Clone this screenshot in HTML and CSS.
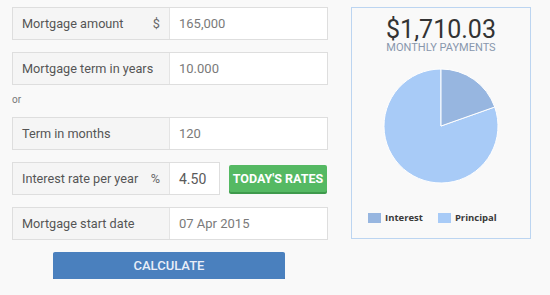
FILE: index.html
```html
<!DOCTYPE html>
<html>
<head>
<meta charset="utf-8">
<link rel="stylesheet" href="styles.css">
</head>
<body>
<div class="page">
  <div class="form">
    <div class="row box">
      <div class="label"><span>Mortgage amount</span><span class="unit">$</span></div>
      <div class="value">165,000</div>
    </div>
    <div class="row box">
      <div class="label"><span>Mortgage term in years</span></div>
      <div class="value">10.000</div>
    </div>
    <div class="or">or</div>
    <div class="row box">
      <div class="label"><span>Term in months</span></div>
      <div class="value">120</div>
    </div>
    <div class="row">
      <div class="box short">
        <div class="label"><span>Interest rate per year</span><span class="unit">%</span></div>
        <div class="value big">4.50</div>
      </div>
      <button class="rates">TODAY'S RATES</button>
    </div>
    <div class="row box">
      <div class="label"><span>Mortgage start date</span></div>
      <div class="value">07 Apr 2015</div>
    </div>
    <div class="actions"><button class="calc">CALCULATE</button></div>
  </div>
  <div class="result">
    <div class="amount">$1,710.03</div>
    <div class="caption">MONTHLY PAYMENTS</div>
    <svg class="pie" width="120" height="120" viewBox="0 0 120 120">
      <path d="M60,60 L113.73,41 A57,57 0 1 1 60,3 Z" fill="#a8cbf7" stroke="#fff" stroke-width="1"/>
      <path d="M60,60 L60,3 A57,57 0 0 1 113.73,41 Z" fill="#97b6e0" stroke="#fff" stroke-width="1"/>
    </svg>
    <div class="legend">
      <div class="item"><span class="sw sw-int"></span>Interest</div>
      <div class="item"><span class="sw sw-pri"></span>Principal</div>
    </div>
  </div>
</div>
</body>
</html>
```

FILE: styles.css
```css
* { box-sizing: border-box; }
html, body { margin: 0; padding: 0; background: #f9f9f9; }
body { font-family: Roboto, "Liberation Sans", sans-serif; }
.page { display: flex; padding: 7px 0 0 12px; gap: 23px; align-items: flex-start; }
.form { width: 316px; display: flex; flex-direction: column; gap: 12px; }
.row { display: flex; height: 33px; align-items: center; }
.box { display: flex; height: 33px; border: 1px solid #dedede; background: #fff; align-items: stretch; }
.row.box { width: 316px; align-items: stretch; }
.box.short { width: 208px; }
.label { width: 157px; flex: none; background: #f5f5f5; border-right: 1px solid #e4e4e4; display: flex; align-items: center; justify-content: space-between; padding: 0 9px 0 9px; font-size: 12.7px; color: #555; }
.unit { color: #666; }
.value { flex: 1; display: flex; align-items: center; padding-left: 9px; font-size: 13px; color: #7a7a7a; }
.value.big { font-size: 14px; color: #5a5a5a; }
.or { height: 8px; line-height: 8px; font-size: 10px; color: #777; margin-top: -1px; margin-bottom: 1px; }
.rates { margin-left: 9px; width: 98px; height: 27px; border: none; border-radius: 2px; background: #55b963; box-shadow: 0 2px 0 #3e9a4c; color: #fff; font-family: Roboto, sans-serif; font-weight: 700; font-size: 12.5px; padding: 0; }
.actions { display: flex; justify-content: center; }
.calc { width: 232px; height: 27px; border: none; border-radius: 2px; background: #4a80be; box-shadow: 0 1px 0 #3b6aa2; color: #e8eef8; font-family: Roboto, sans-serif; font-weight: 500; font-size: 13px; padding: 0; margin-left: -2px; }
.result { width: 180px; height: 232px; border: 1px solid #bcd5f1; display: flex; flex-direction: column; align-items: center; padding-top: 10px; }
.amount { font-size: 25px; line-height: 24px; color: #333; }
.caption { font-size: 11px; line-height: 12px; color: #8897ad; margin-top: 0; }
.pie { margin-top: 12px; display: block; }
.legend { align-self: flex-start; display: flex; padding-left: 16px; margin-top: 25px; gap: 15px; font-family: "Open Sans", sans-serif; font-weight: 700; font-size: 9.5px; color: #3a3a3a; }
.item { display: flex; align-items: center; gap: 4px; }
.sw { width: 13px; height: 10px; display: inline-block; }
.sw-int { background: #97b6e0; }
.sw-pri { background: #a8cbf7; }
```
